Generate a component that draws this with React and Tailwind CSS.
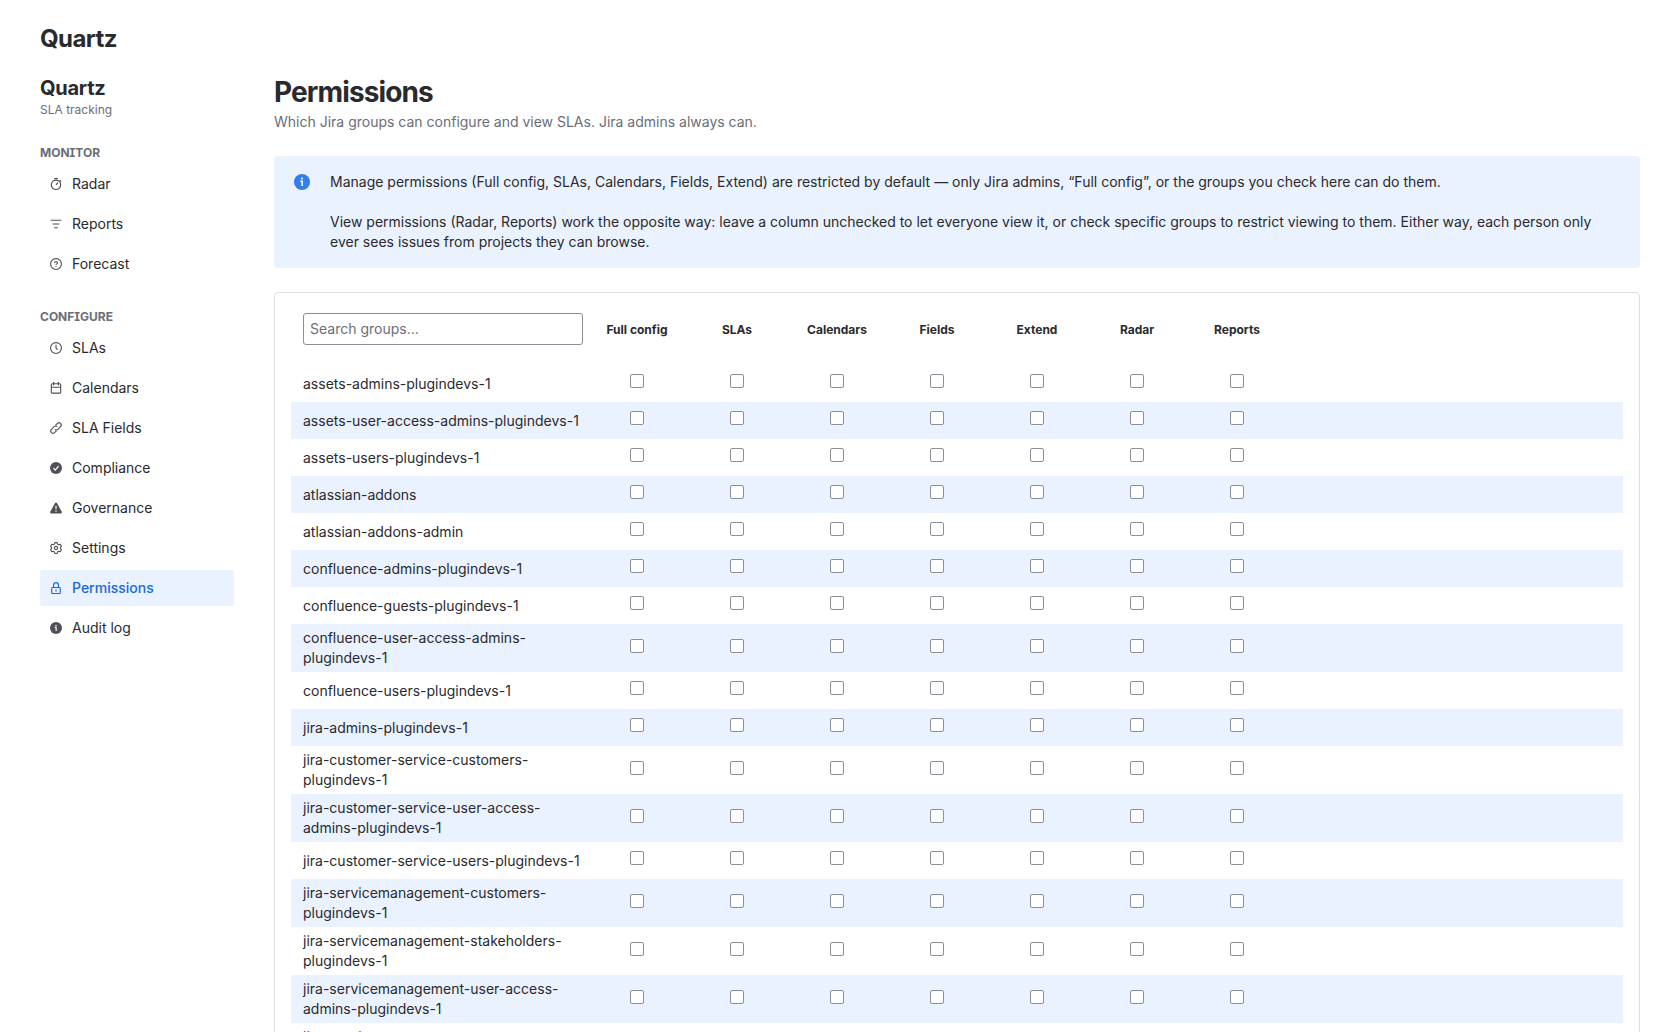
import React, { useMemo, useState } from 'react';

const stroke = { fill: 'none', stroke: 'currentColor', strokeWidth: 1.5 };

const icons = {
  radar: (
    <g {...stroke}>
      <circle cx="8" cy="9" r="6.25" />
      <path d="M5.5 .75h5M8 9l2.75-2.75M13 3l1.75 1.75" />
    </g>
  ),
  reports: <path {...stroke} d="M1 3h14M3.5 8h9M5.5 13h5" />,
  forecast: (
    <g {...stroke}>
      <circle cx="8" cy="8" r="7.25" />
      <path d="M6 6.5c0-1.2.9-1.9 2-1.9s2 .7 2 1.8c0 1.5-2 1.4-2 2.9" />
      <circle cx="8" cy="11.4" r=".9" fill="currentColor" stroke="none" />
    </g>
  ),
  clock: (
    <g {...stroke}>
      <circle cx="8" cy="8" r="7.25" />
      <path d="M8 3.5V8l2 2.5" />
    </g>
  ),
  calendar: (
    <g {...stroke}>
      <rect x="1.75" y="2.25" width="12.5" height="12.5" rx="1.25" />
      <path d="M1.75 7h12.5M4.75 0v4.25M11.25 0v4.25" />
    </g>
  ),
  link: (
    <g {...stroke}>
      <path d="M7.2 4.6 9.9 1.9a2.9 2.9 0 0 1 4.2 4.2l-3.6 3.6a2.9 2.9 0 0 1-4.2 0" />
      <path d="M8.8 11.4l-2.7 2.7a2.9 2.9 0 0 1-4.2-4.2l3.6-3.6a2.9 2.9 0 0 1 4.2 0" />
    </g>
  ),
  check: (
    <g>
      <circle cx="8" cy="8" r="8" fill="currentColor" />
      <path d="M4.6 8.2l2.4 2.5 4.4-5.3" fill="none" stroke="#fff" strokeWidth="1.6" />
    </g>
  ),
  warning: (
    <g>
      <path d="M6.7 1.3a1.5 1.5 0 0 1 2.6 0l6.4 11.8a1.4 1.4 0 0 1-1.2 2.1h-13a1.4 1.4 0 0 1-1.2-2.1z" fill="currentColor" />
      <path d="M8 5v4.5" stroke="#fff" strokeWidth="1.5" />
      <circle cx="8" cy="12" r="1" fill="#fff" />
    </g>
  ),
  settings: (
    <g {...stroke} strokeLinejoin="round">
      <path d="M6.4.75h3.2l.5 2.1 1.5.9 2.1-.6 1.6 2.8L13.8 7.4v1.2l1.5 1.5-1.6 2.8-2.1-.6-1.5.9-.5 2.1H6.4l-.5-2.1-1.5-.9-2.1.6-1.6-2.8 1.5-1.5V7.4L.7 5.9l1.6-2.8 2.1.6 1.5-.9z" />
      <circle cx="8" cy="8" r="2.1" />
    </g>
  ),
  lock: (
    <g {...stroke}>
      <rect x="2.25" y="7.25" width="11.5" height="8" rx="1.25" />
      <path d="M4.75 7V4a3.25 3.25 0 0 1 6.5 0v3M8 10v2.5" />
    </g>
  ),
  info: (
    <g>
      <circle cx="8" cy="8" r="8" fill="currentColor" />
      <path d="M6.3 7.2h1.9V12" fill="none" stroke="#fff" strokeWidth="1.5" />
      <circle cx="8" cy="4.5" r="1" fill="#fff" />
    </g>
  ),
};

const navSections = [
  {
    title: 'MONITOR',
    items: [
      { label: 'Radar', icon: 'radar' },
      { label: 'Reports', icon: 'reports' },
      { label: 'Forecast', icon: 'forecast' },
    ],
  },
  {
    title: 'CONFIGURE',
    items: [
      { label: 'SLAs', icon: 'clock' },
      { label: 'Calendars', icon: 'calendar' },
      { label: 'SLA Fields', icon: 'link' },
      { label: 'Compliance', icon: 'check' },
      { label: 'Governance', icon: 'warning' },
      { label: 'Settings', icon: 'settings' },
      { label: 'Permissions', icon: 'lock' },
      { label: 'Audit log', icon: 'info' },
    ],
  },
];

const columns = ['Full config', 'SLAs', 'Calendars', 'Fields', 'Extend', 'Radar', 'Reports'];

const groups = [
  'assets-admins-plugindevs-1',
  'assets-user-access-admins-plugindevs-1',
  'assets-users-plugindevs-1',
  'atlassian-addons',
  'atlassian-addons-admin',
  'confluence-admins-plugindevs-1',
  'confluence-guests-plugindevs-1',
  'confluence-user-access-admins-plugindevs-1',
  'confluence-users-plugindevs-1',
  'jira-admins-plugindevs-1',
  'jira-customer-service-customers-plugindevs-1',
  'jira-customer-service-user-access-admins-plugindevs-1',
  'jira-customer-service-users-plugindevs-1',
  'jira-servicemanagement-customers-plugindevs-1',
  'jira-servicemanagement-stakeholders-plugindevs-1',
  'jira-servicemanagement-user-access-admins-plugindevs-1',
  'jira-servicemanagement-users-plugindevs-1',
];

const Icon = ({ name, className }) => (
  <svg viewBox="0 0 16 16" className={`shrink-0 overflow-visible ${className}`} aria-hidden="true">
    {icons[name]}
  </svg>
);

const Sidebar = ({ active, onSelect }) => (
  <nav className="w-[194px] shrink-0">
    <h2 className="text-[20px] leading-6 font-bold tracking-[-0.25px]">Quartz</h2>
    <p className="text-xs leading-4 mt-0.5 text-[#6b6e76]">SLA tracking</p>
    {navSections.map((section) => (
      <div key={section.title} className="mt-[27px]">
        <h3 className="text-xs leading-4 font-bold text-[#6b6e76] [font-feature-settings:'cv08']">{section.title}</h3>
        <div className="mt-[5px] flex flex-col gap-1">
          {section.items.map((item) => {
            const isActive = item.label === active;

            return (
              <button
                key={item.label}
                type="button"
                onClick={() => onSelect(item.label)}
                className={`flex items-center gap-2.5 h-9 px-2.5 rounded-[3px] text-sm text-left ${
                  isActive ? 'bg-[#e9f2fe] text-[#1868db] font-medium' : 'text-[#292a2e]'
                }`}
              >
                <Icon name={item.icon} className={isActive ? 'size-3' : 'size-3 text-[#505258]'} />
                {item.label}
              </button>
            );
          })}
        </div>
      </div>
    ))}
  </nav>
);

const App = () => {
  const [active, setActive] = useState('Permissions');
  const [search, setSearch] = useState('');
  const [checked, setChecked] = useState({});

  const visibleGroups = useMemo(() => groups.filter((group) => group.includes(search.trim().toLowerCase())), [search]);

  const toggle = (key) => setChecked((prev) => ({ ...prev, [key]: !prev[key] }));

  return (
    <div className="h-screen overflow-hidden bg-white px-10 pt-[25px] font-['Inter',sans-serif] text-[#292a2e]">
      <h1 className="text-2xl leading-7 font-bold tracking-[-0.55px]">Quartz</h1>

      <div className="mt-[23px] flex gap-10">
        <Sidebar active={active} onSelect={setActive} />

        <main className="flex-1 min-w-0">
          <h1 className="text-[28px] leading-8 font-bold tracking-[-0.88px]">Permissions</h1>
          <p className="mt-1 text-sm text-[#6b6e76]">
            Which Jira groups can configure and view SLAs. Jira admins always can.
          </p>

          <section className="mt-6 flex gap-4 rounded-[4px] bg-[#e9f2fe] p-4">
            <div className="flex h-5 w-6 shrink-0 items-center justify-center text-[#357de8]">
              <Icon name="info" className="size-4" />
            </div>
            <div className="pr-2 text-sm">
              <p>
                Manage permissions (Full config, SLAs, Calendars, Fields, Extend) are restricted by default — only Jira
                admins, “Full config”, or the groups you check here can do them.
              </p>
              <p className="mt-5">
                View permissions (Radar, Reports) work the opposite way: leave a column unchecked to let everyone view
                it, or check specific groups to restrict viewing to them. Either way, each person only ever sees issues
                from projects they can browse.
              </p>
            </div>
          </section>

          <section className="mt-6 rounded-[4px] border border-[#dddee1] p-4">
            <div className="flex h-14 pt-1 pl-3">
              <input
                type="text"
                value={search}
                onChange={(e) => setSearch(e.target.value)}
                placeholder="Search groups..."
                className="mr-1 h-8 w-[280px] rounded-[3px] border border-[#8c8f97] px-1.5 pb-0.5 text-sm placeholder:text-[#6b6e76]"
              />
              {columns.map((column) => (
                <div key={column} className="w-[100px] pt-[9px] text-center text-xs leading-4 font-bold">
                  {column}
                </div>
              ))}
            </div>

            {visibleGroups.map((group) => (
              <div key={group} className="flex min-h-[37px] items-center py-1 pl-3 odd:bg-[#e9f2fe]">
                <div className="mr-1 w-[280px] text-sm">{group}</div>
                {columns.map((column) => {
                  const key = `${group}/${column}`;

                  return (
                    <div key={column} className="flex w-[100px] justify-center pb-[5px]">
                      <input
                        type="checkbox"
                        checked={!!checked[key]}
                        onChange={() => toggle(key)}
                        className="size-3.5 appearance-none rounded-[2px] border border-[#8c8f97] bg-white checked:bg-[#1868db]"
                      />
                    </div>
                  );
                })}
              </div>
            ))}
          </section>
        </main>
      </div>
    </div>
  );
};

export default App;
